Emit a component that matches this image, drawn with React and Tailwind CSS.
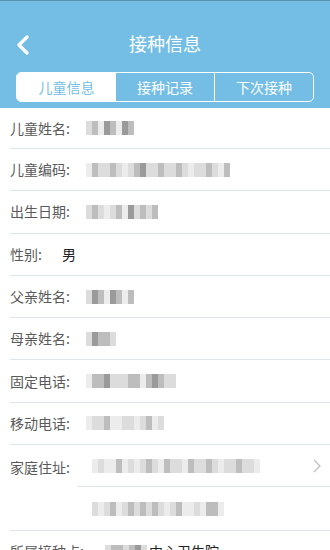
import React from 'react';

const font = { fontFamily: '"Noto Sans CJK SC", "Noto Sans", sans-serif' };

// pixelated "mosaic" value placeholder
function Mosaic({ cells, className = '' }) {
    return (
        <div className={`flex h-[14px] blur-[0.6px] ${className}`}>
            {cells.map((c, i) => (
                <div key={i} className="w-[6px] h-full" style={{ background: c }} />
            ))}
        </div>
    );
}

const d = '#9a9a9a', m = '#bdbdbd', l = '#dcdcdc', x = '#ececec';

const rows = [
    { label: '儿童姓名:', cells: [l, m, x, d, m, x, d, m] },
    { label: '儿童编码:', cells: [x, m, l, l, m, l, x, l, m, d, l, l, m, l, l, m, l, x, l, l, m, l, x, m] },
    { label: '出生日期:', cells: [l, m, l, x, l, m, x, d, l, m, l, m] },
    { label: '性别:', text: '男' },
    { label: '父亲姓名:', cells: [l, d, m, x, d, m, x, m] },
    { label: '母亲姓名:', cells: [l, d, m, m, l] },
    { label: '固定电话:', cells: [x, m, m, d, l, l, l, m, m, x, m, d, m, l, l] },
    { label: '移动电话:', cells: [x, l, l, m, x, x, l, l, x, l, m, x, l] },
];

export default function App() {
    return (
        <div className="w-[330px] h-[550px] overflow-hidden bg-white" style={font}>
            <div className="h-[108px] bg-[#74bee5] border-t border-[#5d93ad] pt-[13px] px-4">
                <div className="relative h-[58px] flex items-center justify-center">
                    <svg className="absolute left-0 top-[21px]" width="14" height="20" viewBox="0 0 14 20">
                        <path d="M11 2 L3 10 L11 18" fill="none" stroke="white" strokeWidth="3.2" strokeLinecap="round" strokeLinejoin="round" />
                    </svg>
                    <span className="text-white text-[18px]">接种信息</span>
                </div>
                <div className="h-[30px] flex border border-white rounded-[5px] overflow-hidden">
                    <div className="w-[99px] bg-white text-[#74bee5] text-[14px] flex items-center justify-center">儿童信息</div>
                    <div className="flex-1 border-r border-white text-white text-[14px] flex items-center justify-center">接种记录</div>
                    <div className="flex-1 text-white text-[14px] flex items-center justify-center">下次接种</div>
                </div>
            </div>

            {rows.map((r, i) => (
                <div key={i} className={`${i === 0 ? 'h-[41px]' : 'h-[42.3px]'} ml-[10px] border-b border-[#dce7eb] flex items-center`}>
                    <span className={`text-[14px] text-[#5a5a5a] ${r.text ? 'w-[52px]' : 'w-[76px]'}`}>{r.label}</span>
                    {r.text ? <span className="text-[14px] text-[#222]">{r.text}</span> : <Mosaic cells={r.cells} />}
                </div>
            ))}

            <div className="ml-[10px] border-b border-[#dce7eb] flex">
                <span className="w-[67px] pt-[12px] text-[14px] text-[#5a5a5a]">家庭住址:</span>
                <div className="flex-1">
                    <div className="h-[42.3px] border-b border-[#dce7eb] flex items-center pl-[15px]">
                        <Mosaic cells={[x, l, x, x, m, x, l, x, l, m, l, x, m, l, l, x, m, l, l, m, l, x, l, l, m, l, l, x]} />
                        <svg className="ml-auto mr-[9px]" width="8" height="14" viewBox="0 0 8 14">
                            <path d="M1 1 L7 7 L1 13" fill="none" stroke="#bdbdbd" strokeWidth="1.2" />
                        </svg>
                    </div>
                    <div className="h-[42.3px] flex items-center pl-[15px]">
                        <Mosaic cells={[l, x, l, m, x, l, m, l, m, l, m, l, x, l, m, x, x, l, x, m, m, x]} />
                    </div>
                </div>
            </div>

            <div className="h-[42px] ml-[10px] flex items-center">
                <span className="w-[95px] text-[14px] text-[#5a5a5a]">所属接种点:</span>
                <Mosaic cells={[l, m, m, l, m, d, l]} />
                <span className="text-[14px] text-[#222] ml-[2px]">中心卫生院</span>
            </div>
        </div>
    );
}
